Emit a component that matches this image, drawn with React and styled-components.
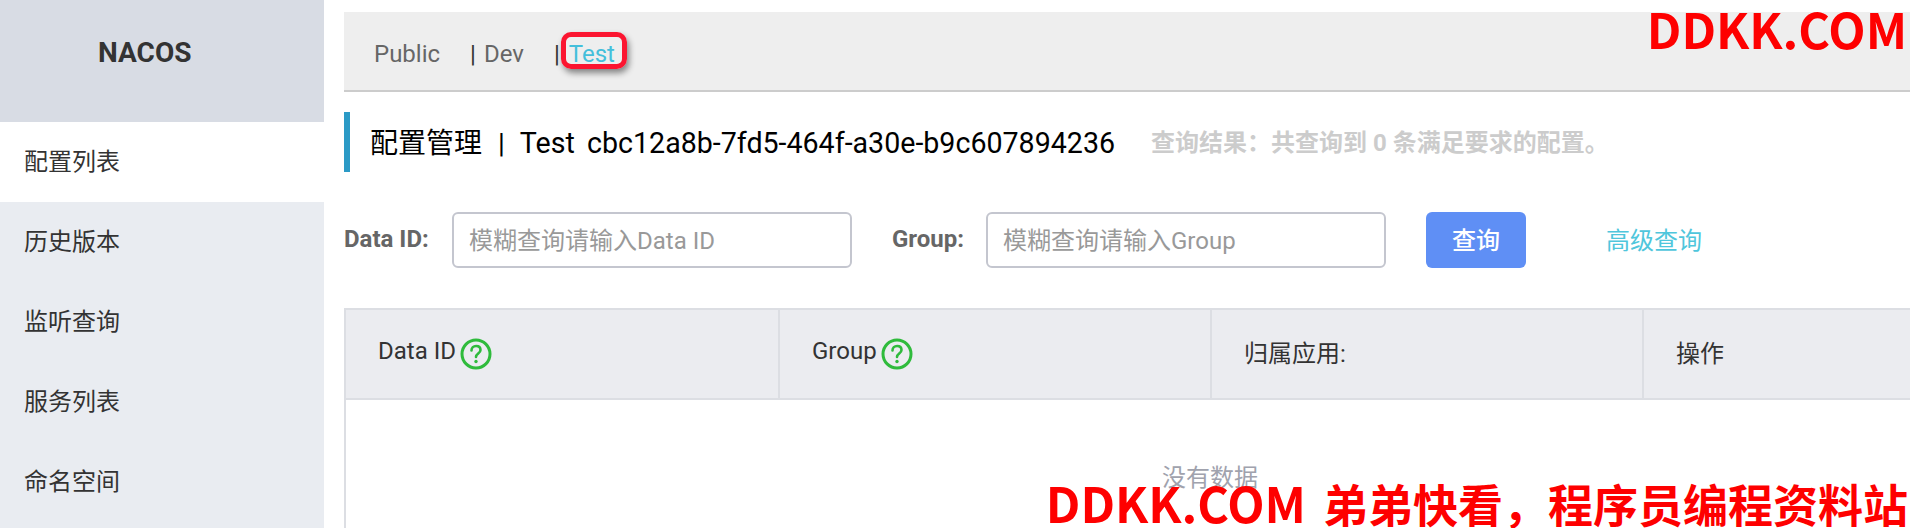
import React from "react";
import styled, { createGlobalStyle } from "styled-components";

const GlobalStyle = createGlobalStyle`
  html, body {
    margin: 0;
    padding: 0;
    height: 100%;
    overflow: hidden;
    background: #fff;
    font-family: Roboto, "Noto Sans CJK SC", sans-serif;
  }
  * { box-sizing: border-box; }
`;

const Page = styled.div`
  position: relative;
  display: flex;
  width: 1910px;
  height: 528px;
  overflow: hidden;
`;

const Sidebar = styled.aside`
  width: 324px;
  flex-shrink: 0;
  background: #e9ecf1;
`;

const Logo = styled.div`
  height: 122px;
  padding: 0 0 18px 98px;
  background: #d8dce4;
  display: flex;
  align-items: center;
  font-size: 28px;
  font-weight: 700;
  color: #333;
`;

const NavItem = styled.div`
  height: 80px;
  padding: 0 0 5px 24px;
  display: flex;
  align-items: center;
  font-size: 24px;
  color: #333;
  background: ${({ $active }) => ($active ? "#fff" : "transparent")};
`;

const Main = styled.main`
  flex: 1;
  min-width: 0;
  padding: 12px 0 0 20px;
`;

const TabBar = styled.div`
  height: 80px;
  padding: 6px 0 0 30px;
  display: flex;
  align-items: center;
  background: #eee;
  border-bottom: 2px solid #ccc;
  font-size: 24px;
  color: #666;
`;

const Tab = styled.span`
  position: relative;
  margin-right: 30px;
  color: ${({ $active }) => ($active ? "#44bfdb" : "#666")};
`;

const Separator = styled.span`
  margin-right: ${({ $gap }) => $gap}px;
  color: #333;
`;

const Highlight = styled.span`
  position: absolute;
  left: -8px;
  top: -8px;
  width: 66px;
  height: 37px;
  border: 5px solid #fb1530;
  border-radius: 10px;
  box-shadow: 2px 4px 6px rgba(0, 0, 0, 0.45);
`;

const TitleRow = styled.div`
  height: 60px;
  margin-top: 20px;
  padding: 0 0 3px 20px;
  display: flex;
  align-items: center;
  border-left: 6px solid #2b9ac6;
`;

const Title = styled.h1`
  margin: 0;
  font-size: 28px;
  font-weight: 400;
  color: #000;
  white-space: pre;
`;

const TitleBar = styled.span`
  margin: 0 15px 0 16px;
  font-size: 28px;
`;

const TitleCode = styled.span`
  font-size: 28.6px;
  word-spacing: -1px;
`;

const ResultText = styled.span`
  margin-left: 36px;
  font-size: 24px;
  font-weight: 700;
  color: #ccc;
`;

const SearchRow = styled.div`
  height: 56px;
  margin-top: 40px;
  display: flex;
  align-items: center;
`;

const FieldLabel = styled.label`
  width: ${({ $width }) => $width}px;
  padding-bottom: 2px;
  font-size: 24px;
  font-weight: 700;
  color: #666;
`;

const SearchInput = styled.div`
  width: 400px;
  height: 56px;
  margin-right: 40px;
  padding: 0 0 3px 15px;
  display: flex;
  align-items: center;
  border: 2px solid #c4c6cf;
  border-radius: 6px;
  font-size: 24px;
  color: #999;
`;

const SearchButton = styled.button`
  width: 100px;
  height: 56px;
  padding: 0 0 4px;
  border: none;
  border-radius: 6px;
  background: #5f8ff5;
  color: #fff;
  font-family: inherit;
  font-size: 24px;
  font-weight: 500;
`;

const AdvancedLink = styled.a`
  margin-left: 80px;
  padding-bottom: 3px;
  font-size: 24px;
  color: #4fc6dc;
`;

const Table = styled.div`
  margin-top: 40px;
  height: 300px;
  border: 2px solid #dcdee3;
  border-right: none;
`;

const HeaderRow = styled.div`
  height: 90px;
  display: flex;
  background: #ebecf0;
  border-bottom: 2px solid #dcdee3;
`;

const HeaderCell = styled.div`
  width: ${({ $width }) => ($width ? `${$width}px` : "auto")};
  flex: ${({ $width }) => ($width ? "none" : "1")};
  padding-left: 32px;
  display: flex;
  align-items: center;
  gap: 4px;
  font-size: 24px;
  color: #333;
  border-right: ${({ $last }) => ($last ? "none" : "2px solid #dcdee3")};
`;

const HeaderLabel = styled.span`
  margin-bottom: 6px;
`;

const EmptyText = styled.div`
  padding-top: 58px;
  padding-left: 816px;
  font-size: 24px;
  color: #a0a2ad;
`;

const Watermark = styled.div`
  position: absolute;
  right: ${({ $right }) => $right}px;
  top: ${({ $top }) => $top}px;
  font-family: "Noto Sans CJK SC", sans-serif;
  font-size: 48.5px;
  line-height: 1;
  font-weight: 700;
  color: #fe0000;
  white-space: nowrap;
`;

const WatermarkCjk = styled.span`
  margin-left: 17px;
  font-size: 45px;
`;

const HelpIcon = () => (
  <svg width="32" height="32" viewBox="0 0 32 32" fill="none">
    <circle cx="16" cy="16" r="14" stroke="#2fbb3c" strokeWidth="3" />
    <path
      d="M11.5 12.5c0-2.8 2-4.5 4.6-4.5s4.4 1.6 4.4 4c0 3.5-4.5 3.6-4.5 7"
      stroke="#2fbb3c"
      strokeWidth="2.6"
      strokeLinecap="round"
    />
    <circle cx="16" cy="23.5" r="1.7" fill="#2fbb3c" />
  </svg>
);

const navItems = ["配置列表", "历史版本", "监听查询", "服务列表", "命名空间"];

export default function App() {
  return (
    <Page>
      <GlobalStyle />
      <Sidebar>
        <Logo>NACOS</Logo>
        {navItems.map((item, i) => (
          <NavItem key={item} $active={i === 0}>
            {item}
          </NavItem>
        ))}
      </Sidebar>
      <Main>
        <TabBar>
          <Tab>Public</Tab>
          <Separator $gap={8}>|</Separator>
          <Tab>Dev</Tab>
          <Separator $gap={9}>|</Separator>
          <Tab $active>
            Test
            <Highlight />
          </Tab>
        </TabBar>
        <TitleRow>
          <Title>
            配置管理<TitleBar>|</TitleBar>
            <TitleCode>Test  cbc12a8b-7fd5-464f-a30e-b9c607894236</TitleCode>
          </Title>
          <ResultText>查询结果：共查询到 0 条满足要求的配置。</ResultText>
        </TitleRow>
        <SearchRow>
          <FieldLabel $width={108}>Data ID:</FieldLabel>
          <SearchInput>模糊查询请输入Data ID</SearchInput>
          <FieldLabel $width={94}>Group:</FieldLabel>
          <SearchInput>模糊查询请输入Group</SearchInput>
          <SearchButton>查询</SearchButton>
          <AdvancedLink>高级查询</AdvancedLink>
        </SearchRow>
        <Table>
          <HeaderRow>
            <HeaderCell $width={434}>
              <HeaderLabel>Data ID</HeaderLabel>
              <HelpIcon />
            </HeaderCell>
            <HeaderCell $width={432}>
              <HeaderLabel>Group</HeaderLabel>
              <HelpIcon />
            </HeaderCell>
            <HeaderCell $width={432}>
              <HeaderLabel>归属应用:</HeaderLabel>
            </HeaderCell>
            <HeaderCell $last>
              <HeaderLabel>操作</HeaderLabel>
            </HeaderCell>
          </HeaderRow>
          <EmptyText>没有数据</EmptyText>
        </Table>
      </Main>
      <Watermark $right={3} $top={4}>DDKK.COM</Watermark>
      <Watermark $right={2} $top={478}>
        DDKK.COM<WatermarkCjk>弟弟快看，程序员编程资料站</WatermarkCjk>
      </Watermark>
    </Page>
  );
}
